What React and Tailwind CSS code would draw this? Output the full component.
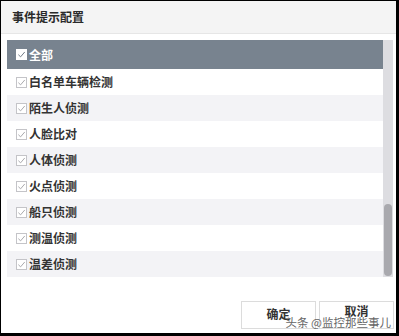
import React from 'react'

const items = ['白名单车辆检测', '陌生人侦测', '人脸比对', '人体侦测', '火点侦测', '船只侦测', '测温侦测', '温差侦测']

function Box({ header }) {
  return (
    <span
      className={
        'mr-[2px] flex h-[11px] w-[11px] shrink-0 items-center justify-center border ' +
        (header ? 'border-white bg-white' : 'border-[#c4c4c8] bg-white')
      }
    >
      <svg viewBox="0 0 10 10" className="h-[9px] w-[9px]">
        <path
          d="M1.5 5.2 L4 7.6 L8.6 2.2"
          fill="none"
          stroke={header ? '#6f7a86' : '#a8a8ac'}
          strokeWidth="1.1"
        />
      </svg>
    </span>
  )
}

export default function App() {
  return (
    <div
      className="relative flex h-[336px] w-[399px] flex-col border-t border-l border-r-[3px] border-b-[3px] border-black bg-white text-[12px] text-[#333]"
      style={{ fontFamily: '"Noto Sans CJK SC", "Noto Sans", sans-serif' }}
    >
      <div className="flex h-[33px] items-center border-b border-[#e6e6e6] bg-[#f4f4f4] px-[11px] font-bold text-[#2a2a2a]">
        事件提示配置
      </div>

      <div className="flex pt-[6px] pl-[6px]">
        <div className="w-[376px]">
          <div className="flex h-[29px] items-center bg-[#78838f] pl-[9px] font-bold text-white">
            <Box header />
            全部
          </div>
          {items.map((t, i) => (
            <div
              key={t}
              className={'flex h-[26px] items-center pl-[9px] font-bold ' + (i % 2 ? 'bg-[#f3f3f6]' : 'bg-white')}
            >
              <Box />
              {t}
            </div>
          ))}
        </div>
        <div className="flex w-[10px] flex-col bg-[#dddde1] pt-[164px]">
          <div className="mx-[1px] h-[72px] rounded-[4px] bg-[#a9a9ae]" />
        </div>
      </div>

      <div className="mt-auto flex justify-end gap-[3px] pr-[2px] pb-[4px]">
        <button className="flex h-[28px] w-[75px] items-center justify-center border border-[#dcdcdc] bg-white pb-[3px] font-bold text-[#333]">
          确定
        </button>
        <button className="flex h-[28px] w-[75px] items-center justify-center border border-[#dcdcdc] bg-white pb-[8px] font-bold text-[#333]">
          取消
        </button>
      </div>

      <div className="absolute right-[5px] bottom-[4px] text-[11.5px] leading-[14px] text-[#666]">头条 @监控那些事儿</div>
    </div>
  )
}
